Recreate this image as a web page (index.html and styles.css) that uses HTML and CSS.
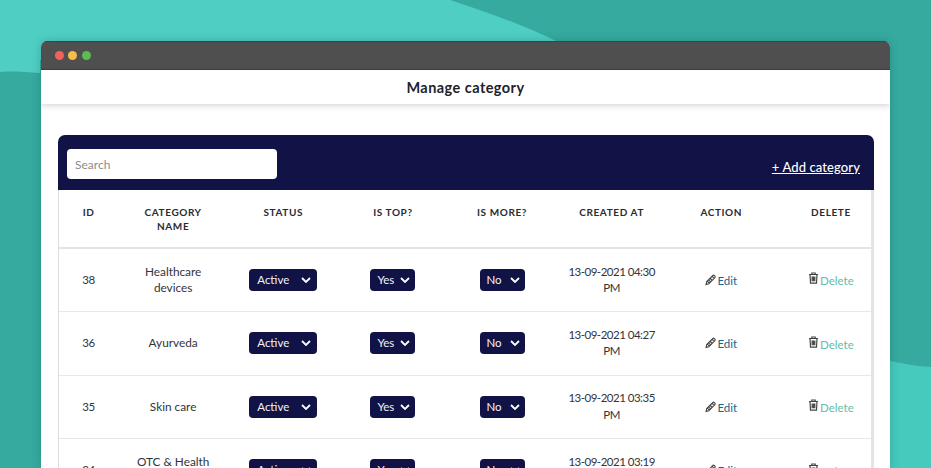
FILE: index.html
```html
<!DOCTYPE html>
<html lang="en">
<head>
<meta charset="utf-8">
<title>Manage category</title>
<link rel="stylesheet" href="styles.css">
</head>
<body>
<svg class="backdrop" viewBox="0 0 931 468" preserveAspectRatio="none" aria-hidden="true">
  <rect width="931" height="468" fill="#36aa9f"/>
  <path d="M0 0H450C490 13 525 26 556 41L556 60H40V73C25 72 12 71 0 72Z" fill="#4fcfc4"/>
  <path d="M880 358C897 363 914 366 931 367V468H880Z" fill="#45cabd"/>
</svg>
<main class="window">
  <div class="titlebar">
    <span class="dot dot-red"></span><span class="dot dot-yellow"></span><span class="dot dot-green"></span>
  </div>
  <header class="pagehead"><h1>Manage category</h1></header>
  <section class="card">
    <div class="cardbar">
      <input class="search" type="text" placeholder="Search">
      <a class="addlink" href="#">+ Add category</a>
    </div>
    <div class="tablewrap">
      <table>
        <colgroup><col class="c-id"><col class="c-w"><col class="c-w"><col class="c-n"><col class="c-n"><col class="c-w"><col class="c-n"><col class="c-w"></colgroup>
        <thead>
          <tr><th>ID</th><th>CATEGORY<br>NAME</th><th>STATUS</th><th>IS TOP?</th><th>IS MORE?</th><th>CREATED AT</th><th>ACTION</th><th>DELETE</th></tr>
        </thead>
        <tbody>
          <tr>
            <td class="num">38</td><td>Healthcare<br>devices</td>
            <td><span class="pill pill-status">Active<svg class="chev" viewBox="0 0 10 6"><path d="M1 1l4 4 4-4"/></svg></span></td>
            <td><span class="pill">Yes<svg class="chev" viewBox="0 0 10 6"><path d="M1 1l4 4 4-4"/></svg></span></td>
            <td><span class="pill">No<svg class="chev" viewBox="0 0 10 6"><path d="M1 1l4 4 4-4"/></svg></span></td>
            <td class="date">13-09-2021 04:30<br>PM</td>
            <td><a class="edit" href="#"><svg class="ico" viewBox="0 0 12 12"><path d="M1.2 10.8l.7-3L8.6 1.1c.5-.5 1.2-.4 1.7.1l.5.5c.5.5.5 1.2 0 1.7L4.2 10.1zM2.6 7.2l2.2 2.2M4 5.8l2.2 2.2M5.6 4.1l2.2 2.2M7.8 2l2.2 2.2"/></svg>Edit</a></td>
            <td><a class="del" href="#"><svg class="ico" viewBox="0 0 11 12"><path d="M1 2.5h9M3.8 2.5V1h3.4v1.5M2 2.5l.5 8.6h6l.5-8.6M4.2 4.5v4.8M5.5 4.5v4.8M6.8 4.5v4.8"/></svg>Delete</a></td>
          </tr>
          <tr>
            <td class="num">36</td><td>Ayurveda</td>
            <td><span class="pill pill-status">Active<svg class="chev" viewBox="0 0 10 6"><path d="M1 1l4 4 4-4"/></svg></span></td>
            <td><span class="pill">Yes<svg class="chev" viewBox="0 0 10 6"><path d="M1 1l4 4 4-4"/></svg></span></td>
            <td><span class="pill">No<svg class="chev" viewBox="0 0 10 6"><path d="M1 1l4 4 4-4"/></svg></span></td>
            <td class="date">13-09-2021 04:27<br>PM</td>
            <td><a class="edit" href="#"><svg class="ico" viewBox="0 0 12 12"><path d="M1.2 10.8l.7-3L8.6 1.1c.5-.5 1.2-.4 1.7.1l.5.5c.5.5.5 1.2 0 1.7L4.2 10.1zM2.6 7.2l2.2 2.2M4 5.8l2.2 2.2M5.6 4.1l2.2 2.2M7.8 2l2.2 2.2"/></svg>Edit</a></td>
            <td><a class="del" href="#"><svg class="ico" viewBox="0 0 11 12"><path d="M1 2.5h9M3.8 2.5V1h3.4v1.5M2 2.5l.5 8.6h6l.5-8.6M4.2 4.5v4.8M5.5 4.5v4.8M6.8 4.5v4.8"/></svg>Delete</a></td>
          </tr>
          <tr>
            <td class="num">35</td><td>Skin care</td>
            <td><span class="pill pill-status">Active<svg class="chev" viewBox="0 0 10 6"><path d="M1 1l4 4 4-4"/></svg></span></td>
            <td><span class="pill">Yes<svg class="chev" viewBox="0 0 10 6"><path d="M1 1l4 4 4-4"/></svg></span></td>
            <td><span class="pill">No<svg class="chev" viewBox="0 0 10 6"><path d="M1 1l4 4 4-4"/></svg></span></td>
            <td class="date">13-09-2021 03:35<br>PM</td>
            <td><a class="edit" href="#"><svg class="ico" viewBox="0 0 12 12"><path d="M1.2 10.8l.7-3L8.6 1.1c.5-.5 1.2-.4 1.7.1l.5.5c.5.5.5 1.2 0 1.7L4.2 10.1zM2.6 7.2l2.2 2.2M4 5.8l2.2 2.2M5.6 4.1l2.2 2.2M7.8 2l2.2 2.2"/></svg>Edit</a></td>
            <td><a class="del" href="#"><svg class="ico" viewBox="0 0 11 12"><path d="M1 2.5h9M3.8 2.5V1h3.4v1.5M2 2.5l.5 8.6h6l.5-8.6M4.2 4.5v4.8M5.5 4.5v4.8M6.8 4.5v4.8"/></svg>Delete</a></td>
          </tr>
          <tr>
            <td class="num">34</td><td>OTC &amp; Health<br>care</td>
            <td><span class="pill pill-status">Active<svg class="chev" viewBox="0 0 10 6"><path d="M1 1l4 4 4-4"/></svg></span></td>
            <td><span class="pill">Yes<svg class="chev" viewBox="0 0 10 6"><path d="M1 1l4 4 4-4"/></svg></span></td>
            <td><span class="pill">No<svg class="chev" viewBox="0 0 10 6"><path d="M1 1l4 4 4-4"/></svg></span></td>
            <td class="date">13-09-2021 03:19<br>PM</td>
            <td><a class="edit" href="#"><svg class="ico" viewBox="0 0 12 12"><path d="M1.2 10.8l.7-3L8.6 1.1c.5-.5 1.2-.4 1.7.1l.5.5c.5.5.5 1.2 0 1.7L4.2 10.1zM2.6 7.2l2.2 2.2M4 5.8l2.2 2.2M5.6 4.1l2.2 2.2M7.8 2l2.2 2.2"/></svg>Edit</a></td>
            <td><a class="del" href="#"><svg class="ico" viewBox="0 0 11 12"><path d="M1 2.5h9M3.8 2.5V1h3.4v1.5M2 2.5l.5 8.6h6l.5-8.6M4.2 4.5v4.8M5.5 4.5v4.8M6.8 4.5v4.8"/></svg>Delete</a></td>
          </tr>
        </tbody>
      </table>
    </div>
  </section>
</main>
</body>
</html>
```
FILE: styles.css
```css
* { box-sizing: border-box; }
html, body { height: 100%; }
body {
  margin: 0;
  height: 468px;
  overflow: hidden;
  font-family: "Lato", "Open Sans", sans-serif;
  color: #26262e;
  padding: 41px 41px 0;
}
.backdrop {
  position: absolute;
  inset: 0;
  width: 931px;
  height: 468px;
  z-index: 0;
}
.window {
  position: relative;
  z-index: 1;
  width: 849px;
  height: 427px;
  background: #fff;
  border-radius: 6px 6px 0 0;
  overflow: hidden;
  box-shadow: 0 0 10px rgba(0, 60, 55, .25);
}
.titlebar {
  height: 29px;
  background: #4f4f4f;
  border-top: 1px solid #3f4443;
  border-bottom: 1px solid #404040;
  display: flex;
  align-items: center;
  gap: 4.5px;
  padding-left: 13.5px;
}
.dot { width: 9px; height: 9px; border-radius: 50%; }
.dot-red { background: #f0635b; }
.dot-yellow { background: #f7bd45; }
.dot-green { background: #5cbb55; }
.pagehead {
  height: 34px;
  padding-top: 1px;
  background: #fff;
  display: flex;
  align-items: center;
  justify-content: center;
  box-shadow: 0 2px 6px rgba(0, 0, 0, .16);
  position: relative;
}
.pagehead h1 {
  margin: 0;
  font-size: 14.5px;
  font-weight: 700;
  letter-spacing: .45px;
  color: #22222a;
}
.card { margin: 31px 16px 0 17px; }
.cardbar {
  height: 55px;
  background: #111346;
  border-radius: 7px 7px 0 0;
  display: flex;
  align-items: flex-start;
  justify-content: space-between;
  padding: 14px 14px 0 9px;
}
.search {
  width: 210px;
  height: 30px;
  border: 0;
  border-radius: 4px;
  padding: 0 8px;
  font: 12px "Lato", sans-serif;
  background: #fff;
}
.search::placeholder { color: #8d8d8d; opacity: 1; }
.addlink {
  margin-top: 9px;
  color: #fff;
  font-size: 13px;
  font-weight: 500;
  letter-spacing: .1px;
  line-height: 18px;
}
.tablewrap {
  overflow: hidden;
  border-left: 1px solid #dedede;
  border-right: 3px solid #e4e4e4;
}
table {
  table-layout: fixed;
  width: 827px;
  border-collapse: collapse;
}
.c-id { width: 59px; }
.c-w { width: 110px; }
.c-n { width: 109px; }
th {
  height: 58px;
  padding: 15px 0 0;
  vertical-align: top;
  font-size: 10px;
  font-weight: 700;
  letter-spacing: .6px;
  line-height: 14px;
  color: #2a2a32;
  border-bottom: 2px solid #e4e4e4;
}
td {
  height: 63.5px;
  padding: 0;
  text-align: center;
  vertical-align: middle;
  font-size: 11.8px;
  line-height: 16.5px;
  color: #33333b;
  border-bottom: 1px solid #e8e8e8;
}
.num { font-size: 11.5px; letter-spacing: -.3px; }
.date { font-size: 11.5px; letter-spacing: -.5px; }
.pill {
  display: inline-flex;
  align-items: center;
  justify-content: space-between;
  width: 45px;
  height: 22px;
  padding: 0 5px 0 7px;
  background: #111346;
  color: #f2f2f8;
  font-size: 11.5px;
  border-radius: 4px;
  vertical-align: middle;
}
.pill-status { width: 68px; padding: 0 6px 0 8px; }
.chev { width: 10px; height: 6px; fill: none; stroke: #fff; stroke-width: 1.8; }
.ico {
  width: 11px;
  height: 12px;
  fill: none;
  stroke: #444;
  stroke-width: 1.2;
  margin-right: 1px;
  vertical-align: -1px;
}
.edit { color: #1d5f8c; text-decoration: none; font-size: 11.5px; position: relative; top: 1px; }
.del { color: #62c0aa; text-decoration: none; font-size: 11.5px; position: relative; top: 1px; }
.del .ico { vertical-align: 1px; }
```
